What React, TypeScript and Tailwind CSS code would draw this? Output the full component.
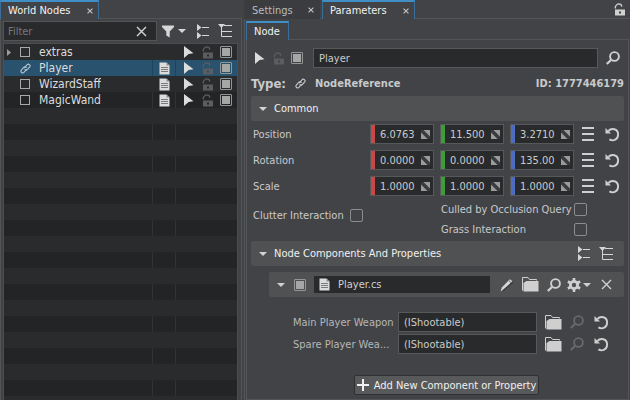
import React from "react";

type IconProps = { className?: string };

const Arrow = ({ className = "" }: IconProps) => (
  <svg width="11" height="12" viewBox="0 0 11 12" className={className} fill="currentColor">
    <path d="M1 0 L10.5 7.2 L5.6 8 L1 12 Z" />
  </svg>
);

const Lock = ({ className = "" }: IconProps) => (
  <svg width="12" height="13" viewBox="0 0 12 13" className={className}>
    <path d="M1.4 5.5 C0.6 3.6 2.6 1 4.8 0.9 C6.4 0.9 7.6 1.8 7.8 3.6" fill="none" stroke="currentColor" strokeWidth="1.3" />
    <path d="M1 6.5H11V12.5H1Z M5 8.5V10.5H7V8.5Z" fill="currentColor" fillRule="evenodd" />
  </svg>
);

const Doc = ({ className = "" }: IconProps) => (
  <svg width="11" height="13" viewBox="0 0 11 13" className={className}>
    <path d="M0.5 0.5H7.5L10.5 3.5V12.5H0.5Z" fill="#dcdcdc" />
    <path d="M7.5 0.5V3.5H10.5Z" fill="#8b8d8f" />
    <path d="M2 5.5H9M2 7.5H9M2 9.5H9" stroke="#77797b" />
  </svg>
);

const Link = ({ className = "" }: IconProps) => (
  <svg width="11" height="11" viewBox="0 0 11 11" className={className} fill="none" stroke="currentColor" strokeWidth="1.1" strokeLinecap="round">
    <path d="M4.6 4.6 L7.2 1.7 C8.4 0.3 11 2.2 9.7 3.9 L7.3 6.6 C6.6 7.3 5.6 7.2 5 6.7" />
    <path d="M6.2 4.4 C5.4 3.8 4.4 3.8 3.7 4.5 L1.3 7.2 C0 8.9 2.5 10.9 3.9 9.4 L6.3 6.7" />
  </svg>
);

const Cross = ({ size = 11, className = "" }: IconProps & { size?: number }) => (
  <svg width={size} height={size} viewBox="0 0 11 11" className={className} stroke="currentColor" strokeWidth={size < 8 ? 2 : 1.4}>
    <path d="M1 1L10 10M10 1L1 10" />
  </svg>
);

const Caret = ({ className = "" }: IconProps) => (
  <svg width="8" height="4" viewBox="0 0 8 4" className={className} fill="currentColor">
    <path d="M0 0H8L4 4Z" />
  </svg>
);

const Funnel = () => (
  <svg width="12" height="13" viewBox="0 0 12 13" fill="currentColor">
    <path d="M0 0.5H12V2L7.7 6.5V12.5L4.3 10.5V6.5L0 2Z" />
  </svg>
);

const CollapseAll = () => (
  <svg width="13" height="15" viewBox="0 0 13 15">
    <path d="M0 0L4.5 3.5L0 7Z M0 8L4.5 11.5L0 15Z" fill="currentColor" />
    <path d="M5 3.5H12M5 11.5H12" stroke="currentColor" />
  </svg>
);

const ExpandAll = () => (
  <svg width="15" height="14" viewBox="0 0 15 14">
    <path d="M0 0H7L3.5 4Z" fill="currentColor" />
    <path d="M6 1.5H14M3.5 3V12.5H14M4 7.5H14" stroke="currentColor" fill="none" />
  </svg>
);

const Search = ({ className = "" }: IconProps) => (
  <svg width="14" height="14" viewBox="0 0 14 14" className={className} fill="none" stroke="currentColor">
    <circle cx="8.5" cy="5.5" r="4.4" strokeWidth="1.9" />
    <path d="M5 9L0.8 13" strokeWidth="2.3" />
  </svg>
);

const Menu = () => (
  <svg width="12" height="14" viewBox="0 0 12 14" stroke="currentColor" strokeWidth="2">
    <path d="M0 1H12M0 7H12M0 13H12" />
  </svg>
);

const Reset = () => (
  <svg width="15" height="15" viewBox="0 0 15 15">
    <path d="M3.4 4 C6.4 0.6 13 1.6 13.1 7.3 C13.2 12.6 8.2 14.6 4.4 12.4" fill="none" stroke="currentColor" strokeWidth="1.9" />
    <path d="M0.5 1V6.5H6Z" fill="currentColor" />
  </svg>
);

const Folder = () => (
  <svg width="17" height="15" viewBox="0 0 17 15">
    <path d="M0.5 13.5V0.5H6L7.5 2.5H14.5V3.5" fill="none" stroke="currentColor" />
    <path d="M4.5 4H16.5V14.5H1.5V6Z" fill="currentColor" />
  </svg>
);

const Pencil = () => (
  <svg width="14" height="14" viewBox="0 0 14 14">
    <path d="M0.8 13.2L1.8 9.5L9.8 1.2L12.8 3.6L4.6 12Z" fill="#d4d4d4" />
    <path d="M2.6 13L13 3.8" stroke="#2b2c2e" strokeWidth="1.2" />
    <path d="M8.8 2.5L11.2 4.8" stroke="#66686a" />
  </svg>
);

const Gear = () => (
  <svg width="14" height="14" viewBox="0 0 14 14">
    <circle cx="7" cy="7" r="3.6" fill="none" stroke="currentColor" strokeWidth="2.8" />
    <path d="M7 0V3M7 11V14M0.9 3.5L3.5 5M10.5 9L13.1 10.5M0.9 10.5L3.5 9M10.5 5L13.1 3.5" stroke="currentColor" strokeWidth="2.6" />
  </svg>
);

const Spinner = () => (
  <svg width="9" height="9" viewBox="0 0 9 9" className="shrink-0">
    <path d="M0 0H9V9H0Z" fill="#3a3b3d" />
    <path d="M2.5 0H9V6.5Z M0 2.5V9H6.5Z" fill="#9a9c9c" />
  </svg>
);

const IconButton = ({ label, className = "", children }: { label: string; className?: string; children: React.ReactNode }) => (
  <button type="button" aria-label={label} className={`flex shrink-0 items-center justify-center ${className}`}>
    {children}
  </button>
);

const Toggle = ({ label }: { label: string }) => (
  <input
    type="checkbox"
    aria-label={label}
    defaultChecked
    className="size-3 shrink-0 appearance-none rounded-[1px] border border-[#949596] bg-[#3a3b3d] p-px checked:bg-[#a5a6a6] checked:bg-clip-content"
  />
);

const Tab = ({ title, active, className = "" }: { title: string; active?: boolean; className?: string }) => (
  <div
    className={`flex h-[19px] items-center justify-between border-x border-t-2 pr-[2px] pl-[7px] ${
      active ? "border-x-[#3a6f9c] border-t-[#3f8fc6] bg-[#424346] text-[#f2f2f2]" : "border-[#3b3c3e] bg-[#3b3c3f] text-[#b9bbbd]"
    } ${className}`}
  >
    <button type="button">{title}</button>
    <IconButton label={`Close ${title}`} className="size-3 text-[#c4c4c4]">
      <Cross size={6} />
    </IconButton>
  </div>
);

type Row = { name: string; kind: "group" | "node" | "link"; doc?: boolean };

const rows: Row[] = [
  { name: "extras", kind: "group" },
  { name: "Player", kind: "link", doc: true },
  { name: "WizardStaff", kind: "node", doc: true },
  { name: "MagicWand", kind: "node", doc: true },
];

const TreeRow = ({ row, index }: { row?: Row; index: number }) => {
  const selected = index === 1;
  const bg = selected ? "bg-[#28526e]" : index % 2 ? "bg-[#232426]" : "bg-[#2a2b2d]";
  const line = selected ? "border-[#1f435b]" : index % 2 ? "border-[#323335]" : "border-transparent";
  return (
    <div className={`flex h-4 shrink-0 items-stretch ${bg}`}>
      <div className="flex min-w-0 flex-1 items-center">
        <span className="flex w-4 shrink-0 pl-[3px]">
          {row?.kind === "group" && (
            <svg width="4" height="7" viewBox="0 0 4 7" fill="#9b9d9e">
              <path d="M0 0L4 3.5L0 7Z" />
            </svg>
          )}
        </span>
        {row && (
          <>
            <span className="flex w-[19px] shrink-0">
              {row.kind === "link" ? <Link className="text-[#b5c7d3]" /> : <span className="size-[10px] border border-[#a8a9aa]" />}
            </span>
            <span className="truncate text-xs text-[#dcdddd]">{row.name}</span>
          </>
        )}
      </div>
      <div className={`flex w-6 shrink-0 items-center justify-center border-x ${line}`}>{row?.doc && <Doc />}</div>
      <div className="flex w-[61px] shrink-0 items-center pl-[7px]">
        {row && (
          <>
            <Arrow className="mr-2 text-[#dcdcdc]" />
            <Lock className="mr-[6px] text-[#5b5d60]" />
            <Toggle label={`Enable ${row.name}`} />
          </>
        )}
      </div>
    </div>
  );
};

const NumberBox = ({ label, value, color }: { label: string; value: string; color: string }) => (
  <div className="flex h-5 w-16 items-center border border-[#57585a] bg-[#292a2c] pr-[3px]">
    <span className={`h-full w-1 shrink-0 ${color}`} />
    <input aria-label={label} defaultValue={value} className="w-full min-w-0 flex-1 pl-[5px] text-[#c9cacb] outline-none" />
    <Spinner />
  </div>
);

const VectorRow = ({ label, values }: { label: string; values: [string, string, string] }) => (
  <div className="flex h-[26px] items-center">
    <span className="flex-1">{label}</span>
    <div className="flex gap-[6px]">
      <NumberBox label={`${label} X`} value={values[0]} color="bg-[#c84848]" />
      <NumberBox label={`${label} Y`} value={values[1]} color="bg-[#3f9c3b]" />
      <NumberBox label={`${label} Z`} value={values[2]} color="bg-[#4f6dc0]" />
    </div>
    <IconButton label={`${label} menu`} className="ml-2 text-[#cfcfcf]">
      <Menu />
    </IconButton>
    <IconButton label={`Reset ${label}`} className="ml-[11px] text-[#cfcfcf]">
      <Reset />
    </IconButton>
  </div>
);

const Check = ({ label }: { label: string }) => (
  <label className="flex h-5 items-center justify-between gap-px whitespace-nowrap">
    {label}
    <input type="checkbox" className="size-[13px] shrink-0 appearance-none rounded-[2px] border border-[#8b8c8d]" />
  </label>
);

const Section = ({ title, children }: { title: string; children?: React.ReactNode }) => (
  <div className="flex h-[25px] items-center rounded-[2px] bg-[#505153] pr-[10px] pl-2 text-[#f0f0f0]">
    <button type="button" className="flex flex-1 items-center gap-[7px] text-left">
      <Caret className="text-[#d4d4d4]" />
      {title}
    </button>
    {children}
  </div>
);

const PropertyRow = ({ label, value }: { label: string; value: string }) => (
  <label className="flex h-[22px] items-center text-[#b5b7b9]">
    <span className="w-[105px] shrink-0 truncate pr-1">{label}</span>
    <input defaultValue={value} className="h-5 w-full min-w-0 flex-1 border border-[#57585a] bg-[#292a2c] pl-[5px] text-[#c9cacb] outline-none" />
    <IconButton label={`Browse ${label}`} className="ml-2 text-[#cfcfcf]">
      <Folder />
    </IconButton>
    <IconButton label={`Find ${label}`} className="ml-2 text-[#66686a]">
      <Search />
    </IconButton>
    <IconButton label={`Reset ${label}`} className="ml-[10px] text-[#cfcfcf]">
      <Reset />
    </IconButton>
  </label>
);

export default function App() {
  return (
    <div className="flex h-screen overflow-hidden bg-[#424346] font-['DejaVu_Sans_Condensed','Noto_Sans',sans-serif] text-[11px] leading-[17px] text-[#c8cacc]">
      <aside className="flex w-[242px] shrink-0 flex-col">
        <div className="flex">
          <Tab title="World Nodes" active className="w-[99px]" />
          <div className="flex-1 border-b border-[#535456]" />
        </div>
        <div className="flex min-h-0 flex-1 flex-col border-r border-l border-[#535456] pt-[2px] pr-[3px] pl-[2px]">
          <div className="flex h-5 items-center text-[#d6d6d6]">
            <div className="flex h-full flex-1 items-center border border-[#535456] bg-[#292a2c] pr-[9px]">
              <input aria-label="Filter" placeholder="Filter" className="w-full min-w-0 flex-1 pl-1 outline-none placeholder:text-[#77787a]" />
              <IconButton label="Clear filter">
                <Cross size={11} />
              </IconButton>
            </div>
            <IconButton label="Filter options" className="ml-[5px] gap-1">
              <Funnel />
              <Caret />
            </IconButton>
            <IconButton label="Collapse all" className="ml-[11px]">
              <CollapseAll />
            </IconButton>
            <IconButton label="Expand all" className="mr-[5px] ml-2">
              <ExpandAll />
            </IconButton>
          </div>
          <div className="mt-[2px] flex min-h-0 flex-1 flex-col overflow-hidden border border-b-0 border-[#4c4d4f]">
            {Array.from({ length: 60 }, (_, i) => (
              <TreeRow key={i} row={rows[i]} index={i} />
            ))}
          </div>
        </div>
      </aside>

      <main className="ml-[2px] flex min-w-0 flex-1 flex-col">
        <div className="flex">
          <Tab title="Settings" className="w-[76px] border-b" />
          <div className="w-[2px] border-b border-[#535456]" />
          <Tab title="Parameters" active className="w-[93px]" />
          <div className="flex flex-1 items-center justify-end border-b border-[#535456] pr-1">
            <IconButton label="Lock panel" className="text-[#d0d0d0]">
              <Lock />
            </IconButton>
          </div>
        </div>
        <div className="flex min-h-0 flex-1 flex-col border-l border-[#535456] pt-[2px] pr-px pl-px">
          <div className="flex">
            <div className="h-[19px] w-[43px] border-x border-t-2 border-x-[#3a6f9c] border-t-[#3f8fc6] pl-[7px] text-[#f2f2f2]">
              <button type="button">Node</button>
            </div>
            <div className="flex-1 border-b border-[#535456]" />
          </div>
          <div className="flex min-h-0 flex-1 flex-col border-x border-b border-[#535456] pr-1 pl-1">
            <div className="mt-2 flex h-5 items-center pl-[3px]">
              <Arrow className="mr-2 text-[#dcdcdc]" />
              <Lock className="mr-[6px] text-[#5b5d60]" />
              <Toggle label="Enable node" />
              <input aria-label="Node name" defaultValue="Player" className="ml-[10px] h-full w-full min-w-0 flex-1 border border-[#57585a] bg-[#292a2c] pl-[5px] text-[#c9cacb] outline-none" />
              <IconButton label="Find node" className="mr-1 ml-2 text-[#d0d0d0]">
                <Search />
              </IconButton>
            </div>
            <div className="mt-[7px] flex h-4 items-center font-bold">
              <span className="w-11 text-[13px]">Type:</span>
              <Link className="mr-[9px]" />
              <span className="flex-1">NodeReference</span>
              <span>ID: 1777446179</span>
            </div>

            <div className="mt-[5px]">
              <Section title="Common" />
            </div>
            <div className="pr-1 pl-[2px]">
              <VectorRow label="Position" values={["6.0763", "11.500", "3.2710"]} />
              <VectorRow label="Rotation" values={["0.0000", "0.0000", "135.00"]} />
              <VectorRow label="Scale" values={["1.0000", "1.0000", "1.0000"]} />
              <div className="flex items-start justify-between pr-[33px]">
                <div className="w-[110px] pt-[6px]">
                  <Check label="Clutter Interaction" />
                </div>
                <div className="w-[146px]">
                  <Check label="Culled by Occlusion Query" />
                  <Check label="Grass Interaction" />
                </div>
              </div>
            </div>

            <div className="mt-[2px]">
              <Section title="Node Components And Properties">
                <IconButton label="Collapse components" className="text-[#d6d6d6]">
                  <CollapseAll />
                </IconButton>
                <IconButton label="Expand components" className="ml-2 text-[#d6d6d6]">
                  <ExpandAll />
                </IconButton>
              </Section>
            </div>
            <div className="mt-[6px] ml-[18px] flex h-[25px] items-center rounded-[2px] bg-[#505153] pr-3 pl-2 text-[#d0d0d0]">
              <IconButton label="Fold Player.cs" className="mr-[9px]">
                <Caret />
              </IconButton>
              <Toggle label="Enable Player.cs" />
              <div className="ml-2 flex h-[17px] flex-1 items-center bg-[#292a2c] pl-[5px]">
                <Doc className="mr-2" />
                Player.cs
              </div>
              <IconButton label="Edit" className="ml-[10px]">
                <Pencil />
              </IconButton>
              <IconButton label="Browse" className="ml-2">
                <Folder />
              </IconButton>
              <IconButton label="Find" className="ml-2">
                <Search />
              </IconButton>
              <IconButton label="Options" className="ml-[6px] gap-[2px]">
                <Gear />
                <Caret />
              </IconButton>
              <IconButton label="Remove" className="ml-[10px]">
                <Cross size={11} />
              </IconButton>
            </div>
            <div className="mt-[14px] pr-[15px] pl-[42px]">
              <PropertyRow label="Main Player Weapon" value="(IShootable)" />
              <PropertyRow label="Spare Player Wea..." value="(IShootable)" />
            </div>
            <div className="mt-5 flex justify-center pl-[18px]">
              <button type="button" className="flex h-5 items-center gap-[5px] rounded-[2px] border border-[#2f3032] bg-[#58595b] px-[2px] text-[#f0f0f0]">
                <svg width="12" height="12" viewBox="0 0 12 12" stroke="currentColor" strokeWidth="2">
                  <path d="M6 0V12M0 6H12" />
                </svg>
                Add New Component or Property
              </button>
            </div>
          </div>
        </div>
      </main>
    </div>
  );
}
